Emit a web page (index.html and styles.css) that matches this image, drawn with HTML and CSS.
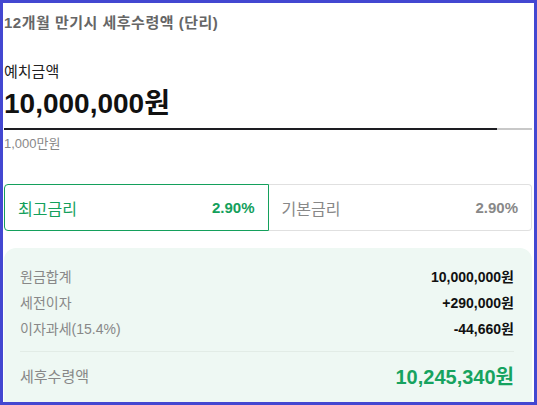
FILE: index.html
```html
<!DOCTYPE html>
<html lang="ko">
<head>
    <meta charset="UTF-8">
    <meta name="viewport" content="width=device-width, initial-scale=1.0">
    <title>세후수령액</title>

    <link rel="stylesheet" href="styles.css">
</head>
<body>
    <div class="frame">
        <p class="title">12개월 만기시 세후수령액 (단리)</p>

        <div class="deposit">
            <p class="label">예치금액</p>
            <p class="amount">10,000,000원</p>
            <div class="bar"><div class="fill" style="width: 93.4%"></div></div>
            <p class="hint">1,000만원</p>
        </div>

        <div class="rates">
            <div class="rate active">
                <span>최고금리</span>
                <b>2.90%</b>
            </div>
            <div class="rate">
                <span>기본금리</span>
                <b>2.90%</b>
            </div>
        </div>

        <div class="summary">
            <div class="row">
                <span>원금합계</span>
                <b>10,000,000원</b>
            </div>
            <div class="row">
                <span>세전이자</span>
                <b>+290,000원</b>
            </div>
            <div class="row">
                <span>이자과세(15.4%)</span>
                <b>-44,660원</b>
            </div>
            <div class="total">
                <span>세후수령액</span>
                <b>10,245,340원</b>
            </div>
        </div>
    </div>
</body>
</html>
```

FILE: styles.css
```css
* {
    box-sizing: border-box;
}

body {
    margin: 0;
    font-family: "Liberation Sans", "Noto Sans CJK KR", sans-serif;
    color: #222;
}

p {
    margin: 0;
}

.frame {
    height: 405px;
    border: 3px solid #4347d1;
    padding: 10px 2px 0 1px;
    overflow: hidden;
}

.title {
    font-size: 15px;
    line-height: 20px;
    font-weight: bold;
    letter-spacing: 0.5px;
    color: #666;
}

.deposit {
    margin-top: 29px;
}

.label {
    font-size: 15px;
    line-height: 20px;
    color: #222;
}

.amount {
    margin-top: 4px;
    font-size: 28px;
    line-height: 36px;
    font-weight: bold;
    color: #111;
}

.bar {
    margin-top: 6px;
    height: 2px;
    background-color: #c8c8c8;
}

.bar > .fill {
    height: 2px;
    background-color: #1d1d22;
}

.hint {
    margin-top: 6px;
    font-size: 13px;
    line-height: 16px;
    color: #888;
}

.rates {
    display: flex;
    margin-top: 32px;
}

.rate {
    flex: 1;
    height: 47px;
    display: flex;
    align-items: center;
    justify-content: space-between;
    padding: 0 13px;
    font-size: 15px;
    color: #888;
    border: 1px solid #e0e0e0;
    border-left: none;
    border-radius: 0 4px 4px 0;
}

.rate > span {
    font-size: 16px;
}

.rate.active {
    color: #14a05c;
    border: 1px solid #14a05c;
    border-radius: 4px 0 0 4px;
}

.summary {
    margin-top: 17px;
    height: 200px;
    padding: 19px 18px 0 16px;
    background-color: #eef8f3;
    border-radius: 12px;
}

.row,
.total {
    display: flex;
    justify-content: space-between;
    align-items: center;
    font-size: 14px;
    line-height: 20px;
}

.row {
    margin-bottom: 6px;
}

.row > span,
.total > span {
    color: #888;
}

.row > b {
    color: #111;
}

.total {
    margin-top: 12px;
    padding-top: 11px;
    border-top: 1px solid #e2ece6;
    line-height: 28px;
}

.total > span {
    font-size: 15px;
}

.total > b {
    font-size: 20px;
    color: #16a35f;
}
```
